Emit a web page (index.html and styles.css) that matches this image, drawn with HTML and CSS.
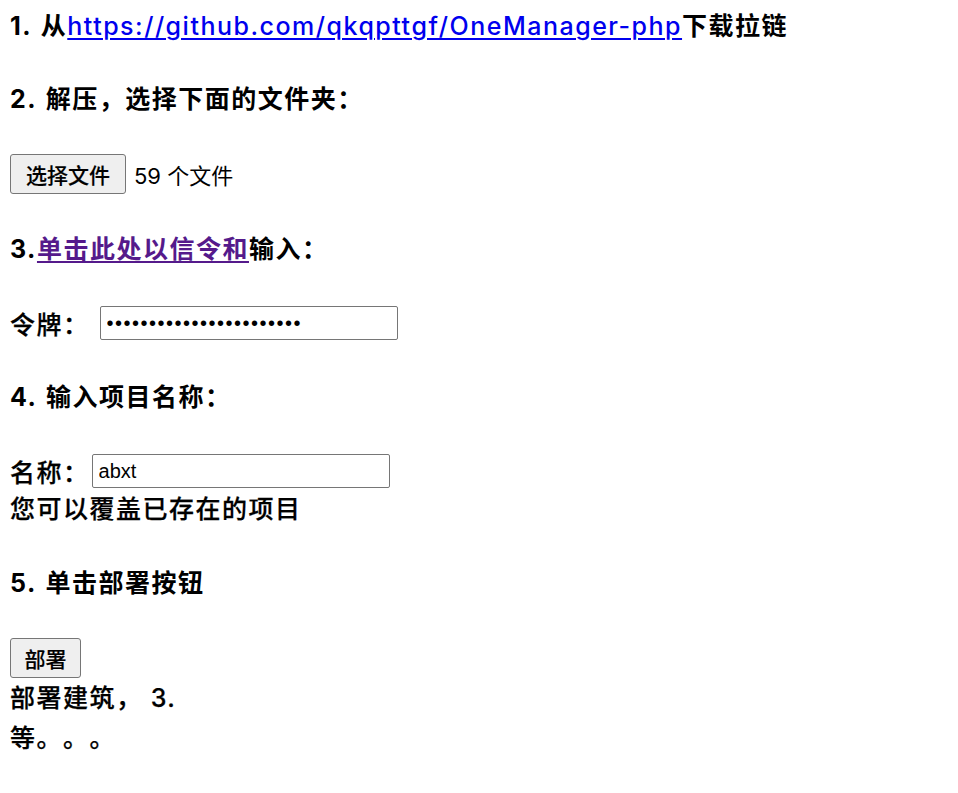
FILE: index.html
```html
<!DOCTYPE html>
<html lang="zh-CN">
<head>
<meta charset="utf-8">
<title>部署</title>
<link rel="stylesheet" href="styles.css">
</head>
<body>
<main class="page">
  <div class="block">
    <p class="line heading">1. 从<a class="link" href="#">https://github.com/qkqpttgf/OneManager-php</a>下载拉链</p>
  </div>
  <div class="block">
    <p class="line heading">2. 解压，选择下面的文件夹：</p>
  </div>
  <div class="block">
    <div class="row row-btn">
      <button class="btn btn-file" type="button">选择文件</button>
      <span class="files">59 个文件</span>
    </div>
  </div>
  <div class="block">
    <p class="line heading">3.<a class="link visited" href="#">单击此处以信令和</a>输入：</p>
  </div>
  <div class="block">
    <div class="row row-input">
      <label class="label label-token">令牌：</label>
      <input class="field field-token" type="password" value="abcdefghijklmnopqrstuvw">
    </div>
  </div>
  <div class="block">
    <p class="line heading">4. 输入项目名称：</p>
  </div>
  <div class="block">
    <div class="row row-input">
      <label class="label">名称：</label>
      <input class="field field-name" type="text" value="abxt">
    </div>
    <p class="line text note">您可以覆盖已存在的项目</p>
  </div>
  <div class="block">
    <p class="line heading">5. 单击部署按钮</p>
  </div>
  <div class="block">
    <div class="row row-btn">
      <button class="btn btn-deploy" type="button">部署</button>
    </div>
    <p class="line text status">部署建筑， 3.</p>
    <p class="line text status">等。。。</p>
  </div>
</main>
</body>
</html>
```

FILE: styles.css
```css
html, body {
  margin: 0;
  padding: 0;
  background: #ffffff;
}

body {
  padding: 8px 10px;
  color: #000000;
  font-family: Inter, "Noto Sans CJK SC", sans-serif;
  text-spacing-trim: space-all;
}

.page {
  display: flex;
  flex-direction: column;
  gap: 37px;
}

.block {
  display: flex;
  flex-direction: column;
}

.line {
  margin: 0;
  height: 36px;
  line-height: 36px;
  white-space: nowrap;
}

.heading {
  font-size: 25px;
  font-weight: 700;
  letter-spacing: 1.5px;
  word-spacing: 2px;
}

.text {
  font-size: 25px;
  font-weight: 500;
  letter-spacing: 1.5px;
  -webkit-text-stroke: 0.25px #000000;
}

.note {
  height: 38px;
  line-height: 38px;
}

.status {
  height: 40px;
  line-height: 40px;
}

.link {
  color: #0000ee;
  font-weight: 500;
  text-decoration: underline;
  text-decoration-thickness: 2px;
  text-underline-offset: 3px;
}

.link.visited {
  color: #551a8b;
  font-weight: 700;
}

.row {
  display: flex;
  align-items: center;
}

.row-btn {
  height: 40px;
}

.row-input {
  height: 38px;
}

.btn {
  height: 40px;
  box-sizing: border-box;
  margin: 0;
  padding: 0 12px;
  border: 1px solid #767676;
  border-radius: 3px;
  background: #efefef;
  color: #000000;
  font-family: Inter, "Noto Sans CJK SC", sans-serif;
  font-size: 21px;
  font-weight: 500;
  -webkit-text-stroke: 0.15px #000000;
}

.btn-file {
  width: 116px;
}

.btn-deploy {
  width: 71px;
}

.files {
  margin-left: 8px;
  font-size: 22px;
  font-weight: 400;
}

.label {
  font-size: 25px;
  font-weight: 500;
  letter-spacing: 1.5px;
  -webkit-text-stroke: 0.25px #000000;
}

.label-token {
  margin-right: 8px;
}

.field {
  box-sizing: border-box;
  height: 34px;
  margin: 0 0 0 2px;
  padding: 0 6px;
  border: 1px solid #767676;
  border-radius: 2px;
  background: #ffffff;
  color: #000000;
  font-family: "Liberation Sans", "Noto Sans CJK SC", sans-serif;
  font-size: 20px;
}

.field-token {
  width: 298px;
  letter-spacing: 1.5px;
}

.field-name {
  width: 298px;
}
```
